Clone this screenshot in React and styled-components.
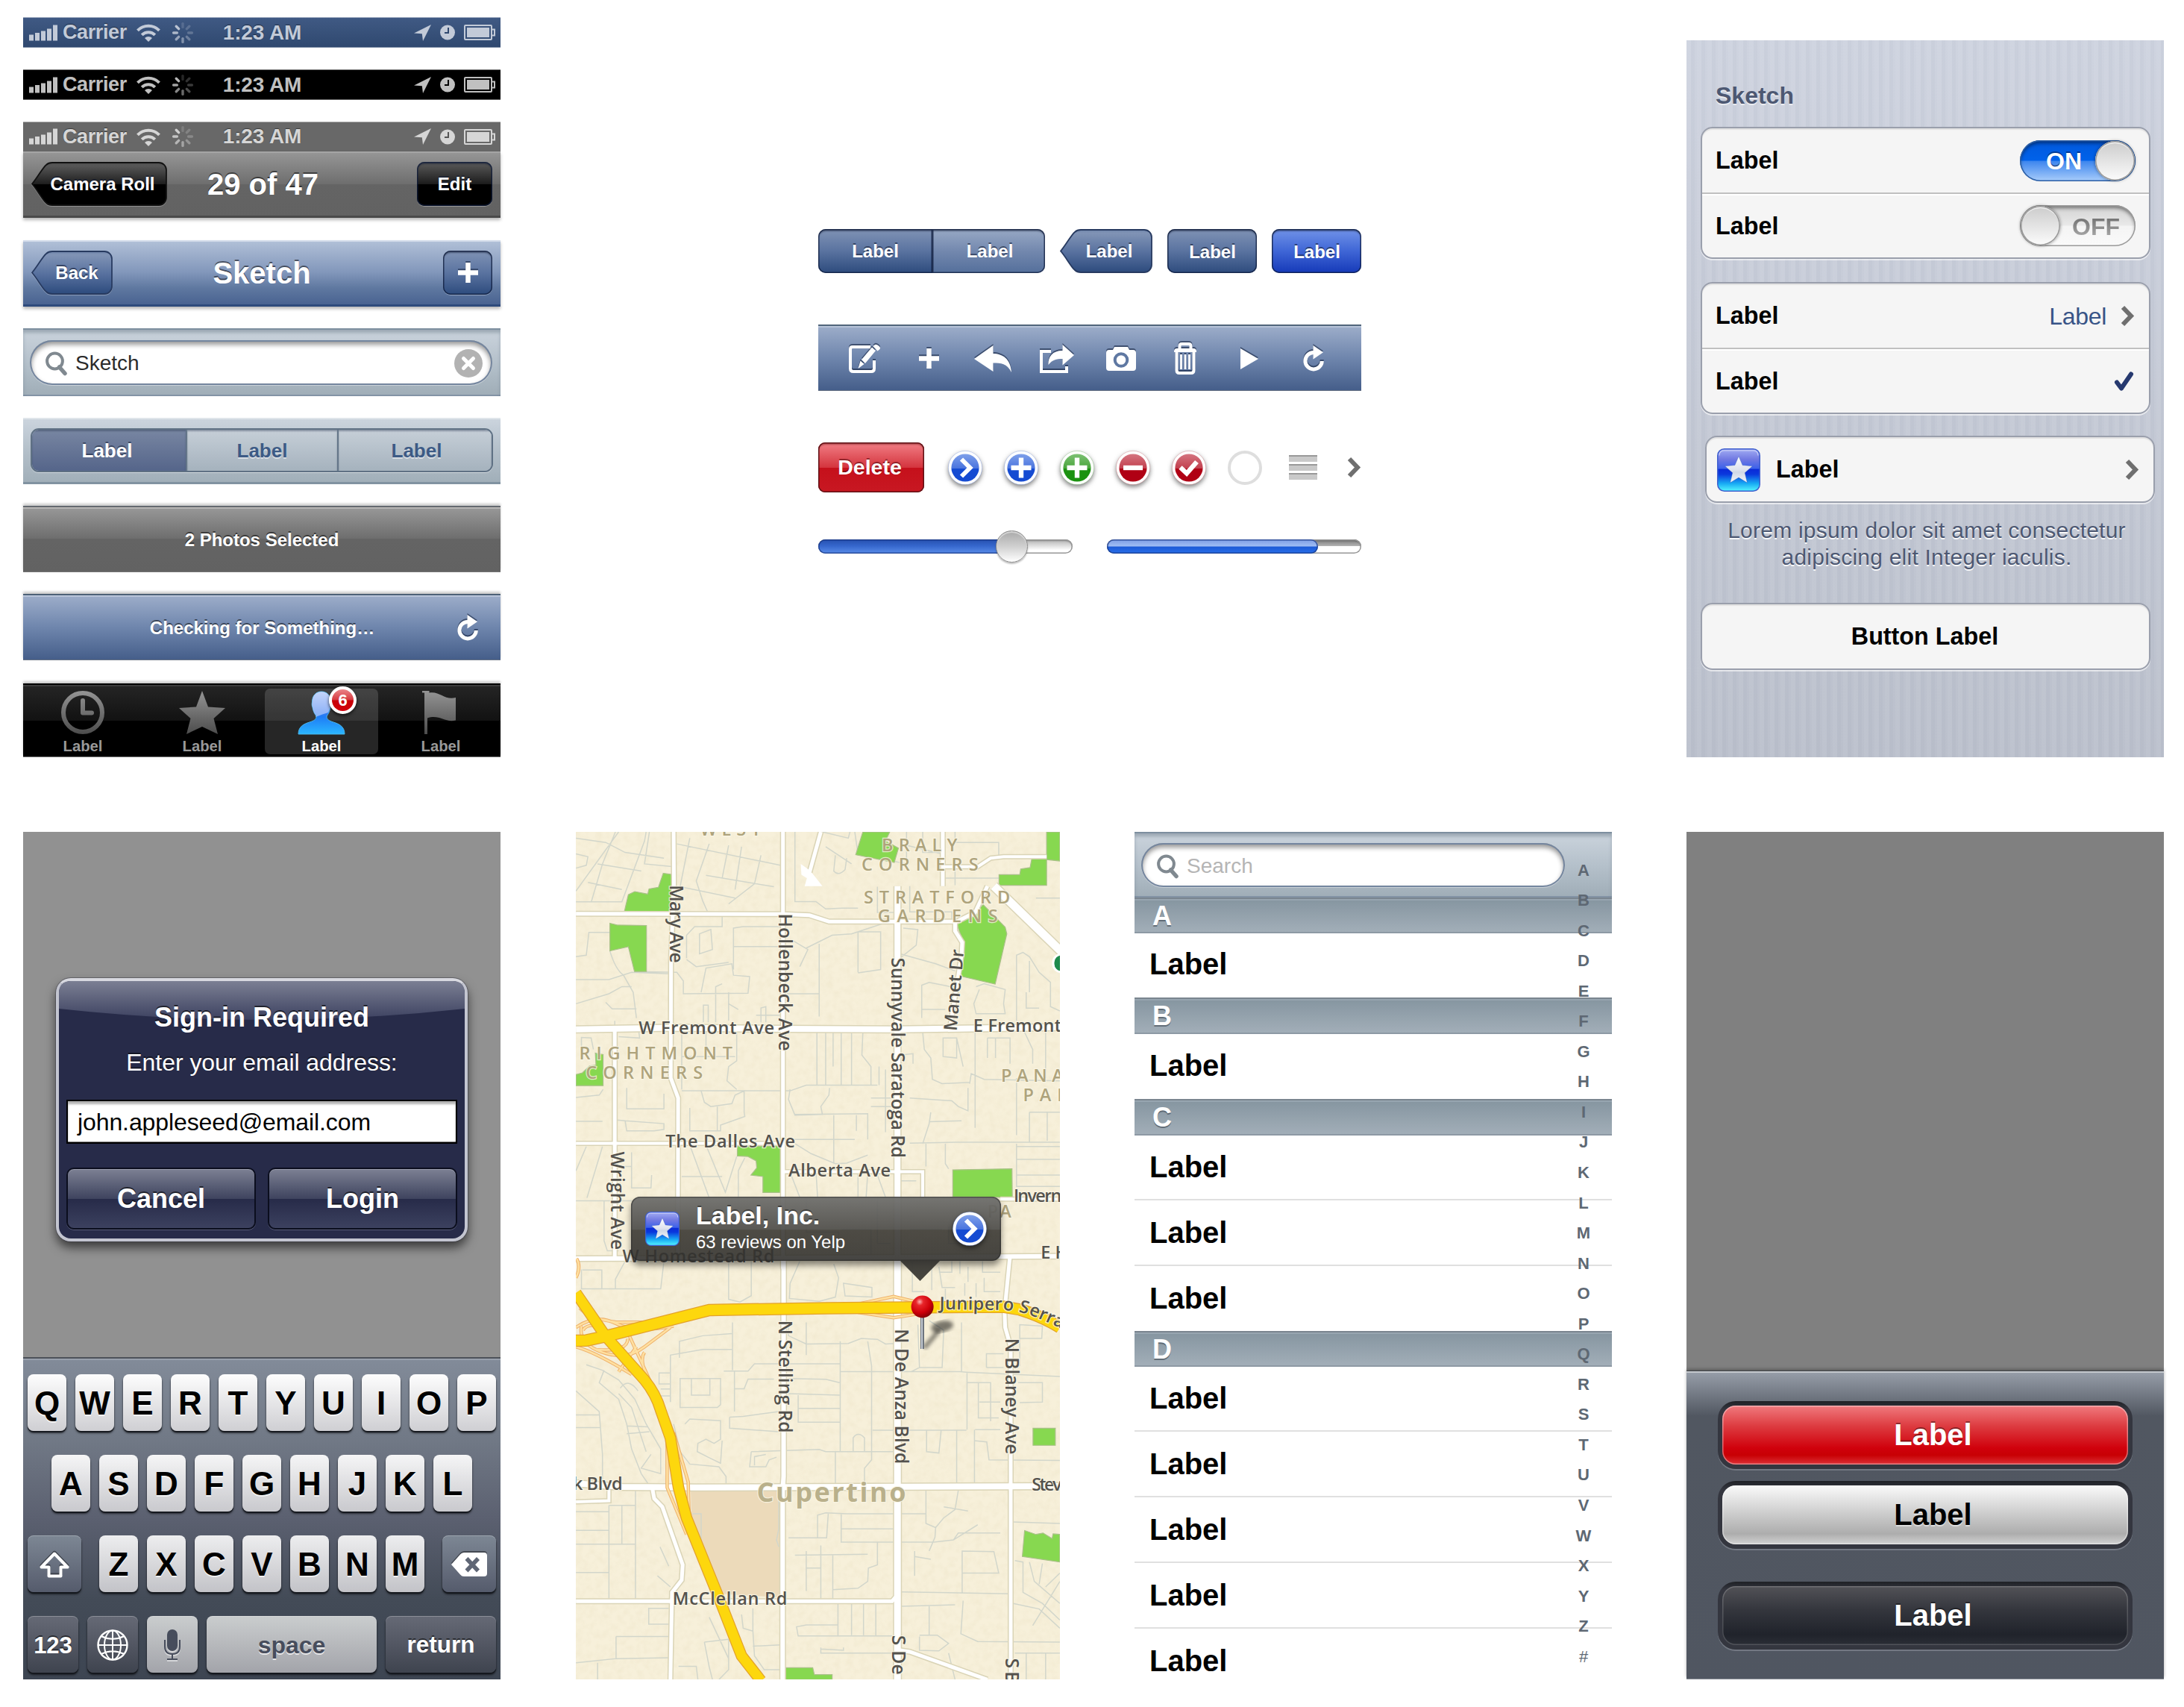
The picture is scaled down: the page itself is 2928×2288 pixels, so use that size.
import React from "react";
import styled, { createGlobalStyle, css } from "styled-components";

const Global = createGlobalStyle`
  * { box-sizing: border-box; }
  body { margin: 0; background: #fff; }
`;

/* ---------- page ---------- */

const Page = styled.main`
  width: 2928px;
  height: 2288px;
  overflow: hidden;
  background: #fff;
  font-family: "Liberation Sans", Arial, sans-serif;
  font-weight: 700;
  line-height: 1;
  white-space: nowrap;
`;
const Band = styled.section`
  display: flex;
  align-items: flex-start;
  height: ${(p) => p.$h}px;
  padding-left: 31px;
`;
const Column = styled.div`
  flex: none;
  display: flex;
  flex-direction: column;
  width: ${(p) => p.$w}px;
  margin-left: ${(p) => p.$ml || 0}px;
  padding-top: ${(p) => p.$pt || 0}px;
`;

/* ---------- shared drawings ---------- */

const Svg = styled.svg`
  display: block;
  flex: none;
  overflow: visible;
  filter: ${(p) => p.$filter || "none"};
`;
const raised = "drop-shadow(0 -2px 0 rgba(20,35,65,.6))";

const PlusIcon = ({ size = 27, bar = 6.5, filter = raised }) => (
  <Svg width={size} height={size} $filter={filter}>
    <path
      d={`M${size / 2} 0V${size}M0 ${size / 2}H${size}`}
      stroke="#fff"
      strokeWidth={bar}
    />
  </Svg>
);
const RefreshIcon = () => (
  <Svg width="28" height="35" viewBox="0 0 28 35" $filter={raised}>
    <path d="M14 9.5a11.2 11.2 0 1 0 11.3 11.5" fill="none" stroke="#fff" strokeWidth="5" />
    <path d="M13.5 0L27 9.2 13.5 18.5Z" fill="#fff" />
  </Svg>
);
const Chevron = ({ color = "#6f6f6f" }) => (
  <Svg width="17" height="27" viewBox="0 0 17 27">
    <path d="M2 2L13 13.5 2 25" fill="none" stroke={color} strokeWidth="6" />
  </Svg>
);
const STAR = "M0 -20L5.6 -7 20 -5.6 9 4 12.4 18.6 0 11 -12.4 18.6 -9 4 -20 -5.6 -5.6 -7Z";
const AppIcon = ({ id, size }) => (
  <Svg width={size} height={size} viewBox="0 0 58 58">
    <defs>
      <linearGradient id={id} x1="0" y1="0" x2="0" y2="1">
        <stop offset="0" stopColor="#a3adf3" />
        <stop offset=".25" stopColor="#7078e2" />
        <stop offset=".46" stopColor="#3c62ea" />
        <stop offset=".49" stopColor="#0a2bd8" />
        <stop offset=".6" stopColor="#0a38dd" />
        <stop offset=".82" stopColor="#18aaf4" />
        <stop offset="1" stopColor="#55f6ff" />
      </linearGradient>
      <linearGradient id={id + "s"} x1="0" y1="0" x2="0" y2="1">
        <stop offset="0" stopColor="#fff" />
        <stop offset=".5" stopColor="#dfe3ee" />
        <stop offset=".6" stopColor="#cfd8e6" />
        <stop offset="1" stopColor="#f4f6fa" />
      </linearGradient>
    </defs>
    <rect x=".75" y=".75" width="56.5" height="56.5" rx="9" fill={`url(#${id})`} stroke="#3f5fce" strokeWidth="1.5" />
    <path d="M3 9.5Q3 2.8 9.5 2.8H48.5Q55 2.8 55 9.5" fill="none" stroke="#c6cdf8" strokeWidth="1.2" />
    <g transform="translate(29 30)">
      <path d={STAR} transform="translate(0 -1) scale(.92)" fill={`url(#${id}s)`} stroke="#1c48b4" strokeOpacity=".35" strokeWidth="1" strokeLinejoin="round" />
    </g>
  </Svg>
);

const discs = {
  blue: ["#7fa0ea", "#4a74de", "#154bd2"],
  green: ["#7cc173", "#4aa53c", "#1b9210"],
  red: ["#d57580", "#c2404e", "#b00014"],
};
const Disc = ({ id, tone, children }) => {
  const c = discs[tone];
  return (
    <Svg width="46" height="46" viewBox="0 0 46 46" $filter="drop-shadow(0 3px 3px rgba(0,0,0,.5))">
      <defs>
        <linearGradient id={id} x1="0" y1="0" x2="0" y2="1">
          <stop offset="0" stopColor={c[0]} />
          <stop offset=".52" stopColor={c[1]} />
          <stop offset=".52" stopColor={c[2]} />
          <stop offset="1" stopColor={c[2]} />
        </linearGradient>
      </defs>
      <circle cx="23" cy="23" r="22.6" fill="#fff" stroke={c[1]} strokeOpacity=".35" strokeWidth=".8" />
      <circle cx="23" cy="23" r="18.6" fill={`url(#${id})`} />
      {children}
    </Svg>
  );
};
const DiscPlus = <path d="M23 9.5V36.5M9.5 23H36.5" stroke="#fff" strokeWidth="6.4" />;
const DiscArrow = <path d="M18 11.5L29.5 23 18 34.5" fill="none" stroke="#fff" strokeWidth="6" />;

/* ---------- status bars ---------- */

const statusFill = {
  blue: "linear-gradient(#405a84, #2f486f)",
  black: "#000",
  grey: "#686868",
};
const StatusBar = styled.div`
  display: grid;
  grid-template-columns: 1fr auto 1fr;
  align-items: center;
  height: ${(p) => (p.$joined ? 40 : 41)}px;
  margin-bottom: ${(p) => (p.$joined ? 0 : 29)}px;
  padding: 0 7px 0 8px;
  background: ${(p) => statusFill[p.$tone]};
  color: ${(p) => (p.$tone === "grey" ? "#d6d6d6" : p.$tone === "blue" ? "#c2cad8" : "#c0c0c0")};
  box-shadow: inset 0 1px 0 rgba(255, 255, 255, 0.45),
    inset 0 ${(p) => (p.$joined ? 0 : -1)}px 0 rgba(255, 255, 255, 0.4);
  text-shadow: 0 -1px 1px rgba(0, 0, 0, 0.45);
`;
const Carrier = styled.div`
  display: flex;
  align-items: center;
  font-size: 27px;
  letter-spacing: -0.4px;
`;
const Clock = styled.time`
  font-size: 28px;
  letter-spacing: -0.1px;
`;
const StatusIcons = styled.div`
  display: flex;
  justify-content: flex-end;
  align-items: center;
  gap: 12px;
`;
const Gap = styled.span`
  width: ${(p) => p.$w}px;
`;
const spokes = [0.2, 0.25, 0.3, 0.4, 0.55, 0.7, 0.85, 0.95];

const Status = ({ tone, joined }) => (
  <StatusBar $tone={tone} $joined={joined}>
    <Carrier>
      <Svg width="38" height="22" fill="currentColor">
        {[8, 10.5, 13, 16, 21].map((h, i) => (
          <rect key={i} x={i * 8} y={21.5 - h} width="6" height={h} />
        ))}
      </Svg>
      <Gap $w={7} />
      Carrier
      <Gap $w={13} />
      <Svg width="32" height="25" viewBox="0 0 32 25" fill="none" stroke="currentColor" strokeWidth="4">
        <path d="M1.5 9.8A20.5 20.5 0 0 1 30.5 9.8M7.2 15.8A12.4 12.4 0 0 1 24.8 15.8" />
        <path d="M16 25L11 20a7 7 0 0 1 10 0Z" fill="currentColor" stroke="none" />
      </Svg>
      <Gap $w={16} />
      <Svg width="28" height="28" viewBox="-14 -14 28 28" stroke="currentColor" strokeWidth="3.4" strokeLinecap="round">
        {spokes.map((o, i) => (
          <path key={i} d="M0 -7.6V-12.4" opacity={o} transform={`rotate(${i * 45})`} />
        ))}
      </Svg>
    </Carrier>
    <Clock>1:23 AM</Clock>
    <StatusIcons>
      <Svg width="23" height="22" viewBox="0 0 23 22" fill="currentColor">
        <path d="M23 0L12 22 10.8 12.2 0 11.4Z" />
      </Svg>
      <Svg width="20" height="21" viewBox="0 0 20 21">
        <circle cx="10" cy="10.5" r="10" fill="currentColor" />
        <path d="M11 4V11H6" fill="none" stroke={tone === "black" ? "#000" : tone === "blue" ? "#2f486f" : "#555"} strokeWidth="2" />
      </Svg>
      <Svg width="42" height="21" viewBox="0 0 42 21">
        <rect x="1" y="1" width="36" height="19" rx="1" fill="none" stroke="currentColor" strokeWidth="2" />
        <rect x="4" y="4" width="30" height="13" fill="currentColor" />
        <path d="M38 6.5h3v8h-3" fill="none" stroke="currentColor" strokeWidth="2" />
      </Svg>
    </StatusIcons>
  </StatusBar>
);

/* ---------- navigation bars ---------- */

const NavBar = styled.header`
  display: grid;
  grid-template-columns: 1fr auto 1fr;
  align-items: center;
  height: 89px;
  padding: 0 11px 2px;
  margin-bottom: ${(p) => (p.$tone === "grey" ? 30 : 29)}px;
  background: ${(p) =>
    p.$tone === "grey"
      ? "linear-gradient(#979797, #6e6e6e 49%, #646464 50%, #626262)"
      : "linear-gradient(#b2c1d8, #8297bb 48%, #5f78a0 72%, #46608f)"};
  box-shadow: inset 0 2px 0 ${(p) => (p.$tone === "grey" ? "#a5a5a5" : "#d3dcea")},
    inset 0 -3px 0 ${(p) => (p.$tone === "grey" ? "#4a4a4a" : "#2e4b7c")},
    0 3px 4px rgba(0, 0, 0, 0.28);
`;
const NavTitle = styled.h1`
  margin: 0;
  padding-left: ${(p) => p.$pl || 0}px;
  font-size: 40px;
  line-height: 44px;
  color: #fff;
  text-shadow: 0 -2px 0 rgba(0, 0, 0, 0.5);
`;

const buttonFill = {
  black: "linear-gradient(#5c5c5c, #1c1c1c 50%, #000 51%, #000)",
  blue: "linear-gradient(#8093b5, #5a73a0 50%, #2d4b7d)",
  bright: "linear-gradient(#7193e8, #3f66d6 50%, #1539b8)",
  light: "linear-gradient(#98a9c5, #7388ae 50%, #546f9b)",
};
const BarButton = styled.button`
  display: flex;
  align-items: center;
  justify-content: center;
  width: ${(p) => p.$w}px;
  height: 59px;
  padding: ${(p) => p.$pt || 0}px 0 0 ${(p) => p.$pl || 0}px;
  justify-self: end;
  border: 0;
  border-radius: 10px;
  font: 700 24px "Liberation Sans", Arial, sans-serif;
  line-height: 1;
  color: #fff;
  background: ${(p) => buttonFill[p.$tone]};
  text-shadow: 0 -2px 0 rgba(20, 30, 55, 0.6);
  box-shadow: inset 0 0 0 1.5px rgba(15, 28, 60, 0.75), inset 0 3px 2px rgba(10, 20, 45, 0.45),
    0 1px 0 rgba(255, 255, 255, 0.35);
`;
const BackShape = styled.button`
  position: relative;
  display: flex;
  align-items: center;
  justify-content: center;
  width: ${(p) => p.$w}px;
  height: 59px;
  padding: 0 0 0 ${(p) => p.$pl}px;
  border: 0;
  background: none;
  font: 700 24px "Liberation Sans", Arial, sans-serif;
  line-height: 1;
  color: #fff;
  text-shadow: 0 -2px 0 rgba(20, 30, 55, 0.6);
  svg { position: absolute; inset: 0; }
  span { position: relative; }
`;
const BackButton = ({ id, w, pl, black, children }) => (
  <BackShape $w={w} $pl={pl}>
    <Svg width={w} height="59" $filter="drop-shadow(0 1px 0 rgba(255,255,255,.3))">
      <defs>
        <linearGradient id={id} x1="0" y1="0" x2="0" y2="1">
          <stop offset="0" stopColor={black ? "#505050" : "#6f84aa"} />
          <stop offset=".08" stopColor={black ? "#565656" : "#8093b5"} />
          <stop offset=".5" stopColor={black ? "#1e1e1e" : "#5a73a0"} />
          <stop offset=".51" stopColor={black ? "#000" : "#5972a0"} />
          <stop offset="1" stopColor={black ? "#000" : "#2d4b7d"} />
        </linearGradient>
      </defs>
      <path
        d={`M1 29.5C9 20 15 8 20 4Q23 1 28 1H${w - 11}a10 10 0 0 1 10 10V48a10 10 0 0 1 -10 10H28Q23 58 20 55C15 51 9 39 1 29.5Z`}
        fill={`url(#${id})`}
        stroke={black ? "#111" : "#273a60"}
        strokeWidth="1.8"
      />
    </Svg>
    <span>{children}</span>
  </BackShape>
);

/* ---------- search, segments, toolbars, tabs ---------- */

const SearchBar = styled.div`
  display: flex;
  align-items: center;
  height: ${(p) => p.$h}px;
  margin-bottom: ${(p) => p.$mb || 0}px;
  padding: 0 ${(p) => p.$pr}px 0 9px;
  padding-top: ${(p) => p.$pt || 0}px;
  background: linear-gradient(#cbd4dd, #b5c1cb 50%, #9fadb7);
  box-shadow: inset 0 2px 0 #7d8f9f, inset 0 6px 4px rgba(110, 125, 140, 0.5), inset 0 -2px 0 #8393a5;
`;
const SearchField = styled.div`
  flex: 1;
  display: flex;
  align-items: center;
  height: ${(p) => p.$h}px;
  padding: 2px 13px 0 21px;
  border-radius: 30px;
  background: #fff;
  color: ${(p) => (p.$empty ? "#b5b5b5" : "#2b2b2b")};
  font-size: 28px;
  font-weight: 400;
  box-shadow: inset 0 0 0 2px #74869f, inset 0 4px 6px 2px rgba(0, 0, 0, 0.4), 0 1px 0 rgba(255, 255, 255, 0.4);
`;
const Query = styled.span`
  flex: 1;
  padding: 1px 0 0 11px;
`;
const Lens = () => (
  <Svg width="29" height="35" viewBox="0 0 29 35" fill="none" stroke="#808990">
    <circle cx="12.5" cy="15" r="10.4" strokeWidth="4" />
    <path d="M18.5 23L26 31.5" strokeWidth="5.5" strokeLinecap="round" />
  </Svg>
);
const SegmentBar = styled.div`
  display: flex;
  align-items: center;
  height: 89px;
  margin-bottom: 29px;
  padding: 0 10px 2px;
  background: linear-gradient(#ccd5de, #b3bfc9 50%, #a0aeb8);
  box-shadow: inset 0 2px 0 #dfe5ea, inset 0 -3px 0 #8193a1;
`;
const Segments = styled.div`
  flex: 1;
  display: flex;
  height: 59px;
  border-radius: 11px;
  overflow: hidden;
  border: 2px solid #5f7184;
  box-shadow: 0 1px 0 rgba(255, 255, 255, 0.5);
`;
const Segment = styled.button`
  flex: 1;
  padding: 0 ${(p) => p.$pr || 0}px 0 ${(p) => p.$pl || 0}px;
  border: 0;
  border-left: ${(p) => (p.$first ? 0 : "2px solid #647689")};
  font: 700 26px "Liberation Sans", Arial, sans-serif;
  line-height: 1;
  color: ${(p) => (p.$on ? "#fff" : "#3c5a85")};
  background: ${(p) => (p.$on ? "linear-gradient(#7886a2, #55658a)" : "linear-gradient(#c6cfd8, #a5b2bd)")};
  text-shadow: ${(p) => (p.$on ? "0 -2px 0 rgba(20,30,55,.55)" : "0 2px 0 rgba(255,255,255,.5)")};
  box-shadow: inset 0 2px 2px rgba(40, 55, 80, 0.4);
`;
const ToolBar = styled.footer`
  display: flex;
  align-items: center;
  height: 89px;
  margin-bottom: ${(p) => p.$mb || 0}px;
  padding: 2px ${(p) => p.$px || 0}px 0;
  font-size: 24px;
  color: #fff;
  text-shadow: 0 -2px 0 rgba(0, 0, 0, 0.5);
  background: ${(p) =>
    p.$tone === "grey"
      ? "linear-gradient(#9a9a9a, #6e6e6e 49%, #646464 50%, #626262)"
      : "linear-gradient(#9fafcb, #6f86ad 50%, #445d89)"};
  box-shadow: inset 0 1px 0 rgba(50, 65, 85, 0.55), inset 0 2px 0 ${(p) => (p.$tone === "grey" ? "#7a7a7a" : "#5a7086")},
    inset 0 4px 0 rgba(255, 255, 255, 0.28), inset 0 -1px 0 rgba(130, 130, 130, 0.6)
    ${(p) => (p.$plain ? "" : ", 0 -3px 3px rgba(0, 0, 0, 0.2)")};
`;
const ToolText = styled.span`
  flex: 1;
  text-align: center;
`;
const ToolSlot = styled.div`
  display: flex;
  align-items: center;
  justify-content: center;
  width: 86px;
`;
const CheckingBar = styled(ToolBar)`
  display: grid;
  grid-template-columns: 1fr auto 1fr;
  padding-right: 30px;
  padding-left: 31px;
  svg { justify-self: end; }
`;

const TabBar = styled.nav`
  display: flex;
  height: 99px;
  margin-top: 2px;
  background: linear-gradient(#262626, #121212 50%, #000 50.5%);
  box-shadow: inset 0 2px 0 #000, inset 0 4px 0 #3c3c3c, inset 0 -1px 0 #777, 0 -3px 3px rgba(0, 0, 0, 0.2);
`;
const Tab = styled.div`
  position: relative;
  display: flex;
  flex-direction: column;
  align-items: center;
  width: 152px;
  height: 88px;
  margin: 7px 4px 0;
  padding-top: 3px;
  border-radius: 7px;
  background: ${(p) => (p.$on ? "rgba(255,255,255,.15)" : "transparent")};
  color: ${(p) => (p.$on ? "#fff" : "#999")};
  font-size: 20.3px;
  span { margin-top: 6px; }
`;
const Badge = styled.b`
  position: absolute;
  left: 86px;
  top: -3px;
  display: flex;
  align-items: center;
  justify-content: center;
  width: 37px;
  height: 37px;
  border: 4px solid #fff;
  border-radius: 50%;
  font-size: 22px;
  color: #fff;
  background: linear-gradient(#ea8589, #d73a40 48%, #c80008 52%, #d1000a);
  box-shadow: 0 2px 4px rgba(0, 0, 0, 0.7);
`;

const TabIcons = {
  clock: (
    <>
      <circle cx="29" cy="29" r="26" fill="none" stroke="url(#tabGrey)" strokeWidth="6" />
      <path d="M29 13V29.5H41" fill="none" stroke="url(#tabGrey)" strokeWidth="6" strokeLinecap="round" strokeLinejoin="round" />
    </>
  ),
  star: <path d="M29 0L37 21.5 60 23 44.5 37 50 58 29 48 8 58 13.5 37 -2 23 21 21.5Z" fill="url(#tabGrey)" />,
  person: (
    <>
      <path
        d="M29 1C36 1 41.5 6 41.5 15C42 17 42 20 41 22C40 28 38 31 36 34C36 38 38 39 42 41C52 44 60 47 60 58H-2C-2 47 6 44 16 41C20 39 22 38 22 34C20 31 18 28 17 22C16 20 16 17 16.5 15C16.5 6 22 1 29 1Z"
        fill="url(#tabBlue)"
        stroke="#48b9f0"
        strokeWidth="1"
      />
      <path d="M29 1C36 1 41.5 6 41.5 15C42 17 42 20 41 22L38 29Q31 31 21 35L22 33C20 31 18 28 17 22C16 20 16 17 16.5 15C16.5 6 22 1 29 1Z" fill="#cfdcfb" opacity=".6" />
    </>
  ),
  flag: (
    <path
      d="M4 0H13.5V2.5C28 0 34 13 49 9V39.5C34 43 27 31 11 36.5V58H7V2.5H4Z"
      fill="url(#tabGrey)"
    />
  ),
};
const TabIcon = ({ name }) => (
  <Svg width="58" height="58" viewBox="0 0 58 58">
    <defs>
      <linearGradient id="tabGrey" gradientUnits="userSpaceOnUse" x1="0" y1="0" x2="0" y2="58">
        <stop offset="0" stopColor="#949494" />
        <stop offset="1" stopColor="#4c4c4c" />
      </linearGradient>
      <linearGradient id="tabBlue" gradientUnits="userSpaceOnUse" x1="0" y1="0" x2="0" y2="58">
        <stop offset="0" stopColor="#b9cdf8" />
        <stop offset=".48" stopColor="#3c7cf0" />
        <stop offset=".6" stopColor="#1f7cf6" />
        <stop offset="1" stopColor="#2ab6ff" />
      </linearGradient>
    </defs>
    {TabIcons[name]}
  </Svg>
);

const BarsColumn = () => (
  <Column $w={640} $pt={23}>
    <Status tone="blue" />
    <Status tone="black" />
    <Status tone="grey" joined />
    <NavBar $tone="grey">
      <BackButton id="backBlack" w={182} pl={9} black>Camera Roll</BackButton>
      <NavTitle $pl={3}>29 of 47</NavTitle>
      <BarButton $tone="black" $w={101}>Edit</BarButton>
    </NavBar>
    <NavBar $tone="blue">
      <BackButton id="backNav" w={109} pl={13}>Back</BackButton>
      <NavTitle>Sketch</NavTitle>
      <BarButton $tone="blue" $w={66}><PlusIcon /></BarButton>
    </NavBar>
    <SearchBar $h={91} $mb={29} $pr={11}>
      <SearchField $h={60}>
        <Lens />
        <Query>Sketch</Query>
        <Svg width="38" height="38" viewBox="0 0 38 38">
          <circle cx="19" cy="19" r="19" fill="#b2b2b2" />
          <path d="M12.5 12.5L25.5 25.5M25.5 12.5L12.5 25.5" stroke="#fff" strokeWidth="5" strokeLinecap="round" />
        </Svg>
      </SearchField>
    </SearchBar>
    <SegmentBar>
      <Segments>
        <Segment $first $on $pr={5}>Label</Segment>
        <Segment>Label</Segment>
        <Segment $pl={4}>Label</Segment>
      </Segments>
    </SegmentBar>
    <ToolBar $tone="grey" $mb={29}><ToolText>2 Photos Selected</ToolText></ToolBar>
    <CheckingBar $mb={29}>
      <i />
      <ToolText>Checking for Something…</ToolText>
      <RefreshIcon />
    </CheckingBar>
    <TabBar>
      <Tab><TabIcon name="clock" /><span>Label</span></Tab>
      <Tab><TabIcon name="star" /><span>Label</span></Tab>
      <Tab $on><TabIcon name="person" /><span>Label</span><Badge>6</Badge></Tab>
      <Tab><TabIcon name="flag" /><span>Label</span></Tab>
    </TabBar>
  </Column>
);

/* ---------- controls ---------- */

const ControlRow = styled.div`
  display: flex;
  align-items: center;
  height: ${(p) => p.$h}px;
  margin-bottom: ${(p) => p.$mb || 0}px;
  gap: ${(p) => p.$gap || 0}px;
`;
const ButtonPair = styled.div`
  display: flex;
  ${BarButton}:first-child { border-radius: 10px 0 0 10px; }
  ${BarButton}:last-child { border-radius: 0 10px 10px 0; }
`;
const DeleteButton = styled.button`
  flex: none;
  width: 142px;
  height: 67px;
  margin-right: 3px;
  border: 0;
  padding: 0 4px 0 0;
  border-radius: 9px;
  font: 700 28.5px "Liberation Sans", Arial, sans-serif;
  line-height: 1;
  color: #fff;
  text-shadow: 0 -2px 0 rgba(70, 0, 5, 0.5);
  background: linear-gradient(#f27f86, #d4353e 50%, #c5101b 51%, #c81822);
  box-shadow: inset 0 0 0 1.5px #5f1115, inset 0 3px 2px rgba(80, 0, 0, 0.4);
`;
const EmptyDisc = styled.span`
  flex: none;
  width: 46px;
  height: 46px;
  border: 4px solid #dedede;
  border-radius: 50%;
`;
const Grip = styled.span`
  flex: none;
  display: flex;
  flex-direction: column;
  gap: 3px;
  width: 38px;
  margin: 0 12px 0 7px;
  i {
    height: 9px;
    background: #c9c9c9;
    border-top: 2px solid #999;
  }
`;
const Track = styled.div`
  position: relative;
  display: flex;
  align-items: center;
  width: 341px;
  height: 19px;
  border-radius: 10px;
  background: ${(p) => (p.$progress ? "linear-gradient(#777, #b5b5b5 48%, #fff 50%)" : "linear-gradient(#b0b0b0, #fff 75%)")};
  box-shadow: inset 0 0 0 1.5px #979797, inset 0 2px 2px rgba(0, 0, 0, 0.3);
`;
const Fill = styled.div`
  width: ${(p) => p.$w}px;
  height: 19px;
  border-radius: 10px;
  background: ${(p) =>
    p.$progress ? "linear-gradient(#7c9ce4, #9fbdf4 48%, #1c5ad6 52%, #2a70ea)" : "linear-gradient(#2650ae, #3566cc 45%, #5b8eea)"};
  box-shadow: inset 0 0 0 1.5px rgba(25, 55, 130, 0.75);
`;
const Knob = styled.div`
  position: absolute;
  left: 238px;
  top: -12px;
  width: 43px;
  height: 43px;
  border: 1.5px solid #8c8c8c;
  border-radius: 50%;
  background: linear-gradient(#a9a9a9, #d0d0d0 50%, #fff);
  box-shadow: inset 0 2px 1px rgba(255, 255, 255, 0.5), 0 2px 2px rgba(0, 0, 0, 0.25);
`;

const toolIcons = [
  <Svg key="compose" width="42" height="38" viewBox="0 0 42 38" $filter={raised}>
    <path d="M29 3H5Q2 3 2 6V32Q2 36 6 36H30Q34 36 34 32V21" fill="none" stroke="#fff" strokeWidth="4" />
    <path d="M12.5 32L15.5 21.5 20.5 26ZM17 20L31 3.5 36 8 22 25ZM32.5 2L35 0Q37-1 40 1.5T41.5 6L38.5 8.5Z" fill="#fff" />
  </Svg>,
  <PlusIcon key="plus" />,
  <Svg key="reply" width="50" height="36" viewBox="0 0 50 36" $filter={raised}>
    <path d="M0 18L25.5 0V11C38 11 49 18 50 36C44 24 36 23.5 25.5 23.5V35Z" fill="#fff" />
  </Svg>,
  <Svg key="share" width="46" height="38" viewBox="0 0 46 38" $filter={raised}>
    <path d="M15 9H2V36H36V29" fill="none" stroke="#fff" strokeWidth="4" />
    <path d="M46 14L30.5 0V8C17 8 11 16 11.5 27C17 20 22 19 30.5 19V27.5Z" fill="#fff" />
  </Svg>,
  <Svg key="camera" width="40" height="32" viewBox="0 0 40 32" $filter={raised}>
    <path d="M4 4H9L11 0H29L31 4H36Q40 4 40 8V28Q40 32 36 32H4Q0 32 0 28V8Q0 4 4 4Z" fill="#fff" />
    <circle cx="20" cy="17.5" r="8.3" fill="#fff" stroke="#5f78a2" strokeWidth="4" />
  </Svg>,
  <Svg key="trash" width="32" height="43" viewBox="0 0 32 43" fill="none" stroke="#fff" $filter={raised}>
    <path d="M8.500 8V5Q8.500 2 11.500 2H20.500Q23.500 2 23.500 5V8" strokeWidth="4" />
    <path d="M1 13V12Q1 8 5 8H27Q31 8 31 12V13Z" fill="#fff" stroke="none" />
    <path d="M4.500 12V37Q4.500 41 8 41H24Q27.500 41 27.500 37V12" strokeWidth="4" />
    <path d="M10.500 16V36M16 16V36M21.500 16V36" strokeWidth="2.800" />
  </Svg>,
  <Svg key="play" width="24" height="28" viewBox="0 0 24 28" $filter={raised}>
    <path d="M0 0L24 14 0 28Z" fill="#fff" />
  </Svg>,
  <RefreshIcon key="refresh" />,
];

const ControlsColumn = () => (
  <Column $w={728} $ml={426} $pt={307}>
    <ControlRow $h={59} $mb={69} $gap={20}>
      <ButtonPair>
        <BarButton $tone="blue" $w={153}>Label</BarButton>
        <BarButton $tone="light" $w={151} $pl={3}>Label</BarButton>
      </ButtonPair>
      <BackButton id="backLabel" w={124} pl={8}>Label</BackButton>
      <BarButton $tone="blue" $w={120} $pt={2} $pl={1}>Label</BarButton>
      <BarButton $tone="bright" $w={120} $pt={2} $pl={1}>Label</BarButton>
    </ControlRow>
    <ToolBar $px={19} $plain $mb={69}>
      {toolIcons.map((icon, i) => <ToolSlot key={i}>{icon}</ToolSlot>)}
    </ToolBar>
    <ControlRow $h={67} $mb={63} $gap={29}>
      <DeleteButton>Delete</DeleteButton>
      <Disc id="d1" tone="blue">{DiscArrow}</Disc>
      <Disc id="d2" tone="blue">{DiscPlus}</Disc>
      <Disc id="d3" tone="green">{DiscPlus}</Disc>
      <Disc id="d4" tone="red"><path d="M10 23H36" stroke="#fff" strokeWidth="6.400" /></Disc>
      <Disc id="d5" tone="red"><path d="M11.500 22.500L20 30.500 33.500 15" fill="none" stroke="#fff" strokeWidth="6.400" /></Disc>
      <EmptyDisc />
      <Grip><i /><i /><i /></Grip>
      <Chevron />
    </ControlRow>
    <ControlRow $h={19} $gap={46}>
      <Track><Fill $w={258} /><Knob /></Track>
      <Track $progress><Fill $w={283} $progress /></Track>
    </ControlRow>
  </Column>
);

/* ---------- grouped settings ---------- */

const Settings = styled.div`
  height: 961px;
  margin-top: 54px;
  padding: 58px 18px 0 19px;
  background: repeating-linear-gradient(90deg, rgba(255, 255, 255, 0.05) 0 6px, rgba(80, 95, 120, 0.03) 6px 11px, transparent 11px 14px),
    linear-gradient(#ced3df, #bbc0cc);
`;
const GroupTitle = styled.h2`
  margin: 0 0 26px 20px;
  font-size: 32px;
  line-height: 32px;
  color: #4d5872;
  text-shadow: 0 2px 0 rgba(255, 255, 255, 0.6);
`;
const Group = styled.div`
  margin: 0 ${(p) => -(p.$dx || 0)}px ${(p) => p.$mb}px ${(p) => p.$dx || 0}px;
  border: 2px solid #9a9fac;
  border-radius: 16px;
  background: #f5f5f5;
  box-shadow: 0 2px 0 rgba(255, 255, 255, 0.6), inset 0 2px 1px rgba(0, 0, 0, 0.08);
`;
const Cell = styled.div`
  display: flex;
  align-items: center;
  justify-content: ${(p) => (p.$center ? "center" : "flex-start")};
  height: 86px;
  padding: 1px 20px 0 ${(p) => p.$pl || 18}px;
  font-size: 32.3px;
  color: #000;
  & + & {
    height: 87px;
    border-top: 2px solid #c0c0c0;
    box-shadow: inset 0 2px 0 #fff;
  }
`;
const Spring = styled.span`
  flex: 1;
`;
const CellValue = styled.span`
  margin-right: 20px;
  font-size: 32px;
  font-weight: 400;
  letter-spacing: -0.3px;
  color: #385487;
`;
const CellLabel = styled.span`
  padding-left: ${(p) => p.$pl || 0}px;
`;
const SwitchBody = styled.div`
  position: relative;
  display: flex;
  align-items: center;
  justify-content: ${(p) => (p.$on ? "flex-end" : "flex-start")};
  width: 155px;
  height: 55px;
  border-radius: 28px;
  background: ${(p) =>
    p.$on
      ? "linear-gradient(#0058dc, #0062ea 49%, #3d86ee 51%, #a9cdfb)"
      : "linear-gradient(#d2d2d2, #e9e9e9 49%, #f4f4f4 51%, #fafafa)"};
  box-shadow: inset 0 0 0 1.5px ${(p) => (p.$on ? "#2c5fa5" : "#9a9a9a")}, inset 0 4px 5px rgba(0, 0, 0, 0.45);
  margin: 0 -2px 1px 0;
`;
const SwitchWord = styled.span`
  font-size: 32px;
  padding-top: 2px;
  margin: ${(p) => (p.$on ? "0 17px 0 0" : "0 0 0 15px")};
  ${(p) =>
    p.$on
      ? css`color: #fff; text-shadow: 0 -2px 0 rgba(0, 20, 70, 0.5);`
      : css`color: transparent; background: linear-gradient(#666, #adadad); background-clip: text;`}
`;
const SwitchKnob = styled.span`
  width: 53px;
  height: 53px;
  margin: 0 1px;
  border-radius: 50%;
  background: linear-gradient(#cbcbcb, #fcfcfc);
  box-shadow: inset 0 0 0 1.5px #979797, inset 0 3px 1px rgba(255, 255, 255, 0.8), 0 0 4px rgba(0, 0, 0, 0.45);
`;
const Note = styled.p`
  margin: 0 0 43px 3px;
  text-align: center;
  font-size: 30px;
  line-height: 36px;
  font-weight: 400;
  letter-spacing: 0.22px;
  color: #4d5872;
  text-shadow: 0 2px 0 rgba(255, 255, 255, 0.9);
`;

const SettingsColumn = () => (
  <Column $w={640} $ml={436}>
    <Settings>
      <GroupTitle>Sketch</GroupTitle>
      <Group $mb={31}>
        <Cell>
          Label<Spring />
          <SwitchBody $on><SwitchWord $on>ON</SwitchWord><SwitchKnob /></SwitchBody>
        </Cell>
        <Cell>
          Label<Spring />
          <SwitchBody><SwitchKnob /><SwitchWord>OFF</SwitchWord></SwitchBody>
        </Cell>
      </Group>
      <Group $mb={29}>
        <Cell>Label<Spring /><CellValue>Label</CellValue><Chevron /></Cell>
        <Cell>
          Label<Spring />
          <Svg width="27" height="27" viewBox="0 0 27 27">
            <path d="M4 14.5L10 22.5 23 3.5" fill="none" stroke="#26396f" strokeWidth="6" strokeLinecap="round" strokeLinejoin="round" />
          </Svg>
        </Cell>
      </Group>
      <Group $mb={19} $dx={6}>
        <Cell $pl={14}>
          <AppIcon id="appCell" size={58} />
          <CellLabel $pl={21}>Label</CellLabel>
          <Spring />
          <Chevron />
        </Cell>
      </Group>
      <Note>
        Lorem ipsum dolor sit amet consectetur
        <br />
        adipiscing elit Integer iaculis.
      </Note>
      <Group $mb={0}><Cell $center>Button Label</Cell></Group>
    </Settings>
  </Column>
);

/* ---------- alert and keyboard ---------- */

const AlertScreen = styled.div`
  display: flex;
  flex-direction: column;
  height: 1136px;
  background: #919191;
`;
const Alert = styled.div`
  position: relative;
  width: 552px;
  height: 353px;
  margin: 196px 0 155px 44px;
  padding: 31px 10px 0;
  border: 4px solid #c3c5d0;
  border-top-color: #d8d9e0;
  border-radius: 20px;
  background: #272b49;
  box-shadow: 0 0 0 1px rgba(60, 60, 70, 0.5), 0 8px 14px rgba(0, 0, 0, 0.6);
  text-align: center;
  color: #fff;
`;
const Gloss = styled.svg`
  position: absolute;
  left: 0;
  top: 0;
`;
const AlertTitle = styled.h2`
  position: relative;
  margin: 0 0 26px;
  font-size: 36px;
  line-height: 36px;
  text-shadow: 0 -2px 0 rgba(0, 0, 0, 0.6);
`;
const AlertText = styled.p`
  margin: 0 0 34px;
  font-size: 32px;
  font-weight: 400;
  letter-spacing: -0.05px;
  line-height: 32px;
  text-shadow: 0 -2px 0 rgba(0, 0, 0, 0.5);
`;
const AlertField = styled.div`
  display: flex;
  align-items: center;
  height: 59px;
  margin-bottom: 32px;
  padding-left: 13px;
  border: 2px solid #000;
  background: #fff;
  color: #000;
  font-size: 32px;
  font-weight: 400;
  letter-spacing: -0.1px;
  box-shadow: inset 0 4px 3px rgba(0, 0, 0, 0.3), inset 0 -1px 0 #888;
`;
const AlertButtons = styled.div`
  display: grid;
  grid-template-columns: 1fr 1fr;
  gap: 16px;
`;
const AlertButton = styled.button`
  height: 83px;
  padding: 0;
  border: 2px solid #0b0e1e;
  border-radius: 10px;
  font: 700 36px "Liberation Sans", Arial, sans-serif;
  line-height: 1;
  color: #fff;
  text-shadow: 0 -2px 0 rgba(0, 0, 0, 0.6);
  background: linear-gradient(#7c8093, #3f445f 50%, #272b49 51%, #3c415f);
  box-shadow: inset 0 1px 0 #9c9fae, 0 1px 0 #5a5e78;
`;

const Keyboard = styled.div`
  flex: 1;
  display: flex;
  flex-direction: column;
  gap: 32px;
  padding: 21px 6px 0;
  border-top: 2px solid #4d525a;
  background: linear-gradient(#828b99, #717986 25%, #5b6070 50%, #434b57 75%, #3d4552);
  box-shadow: inset 0 2px 0 #98a0ac;
`;
const KeyRow = styled.div`
  display: flex;
  justify-content: ${(p) => (p.$spread ? "space-between" : "center")};
  gap: 12px;
`;
const keyFill = {
  light: "linear-gradient(#fdfdfd, #cfcfd3)",
  slate: "linear-gradient(#7d8794, #555b6c)",
  dark: "linear-gradient(#666a76, #3f444f)",
  soft: "linear-gradient(#cacdce, #a3a4aa)",
};
const Key = styled.button`
  display: flex;
  align-items: center;
  justify-content: center;
  width: ${(p) => p.$w || 52}px;
  height: 76px;
  padding: 2px 0 0;
  border: 0;
  border-radius: 8px;
  font: 700 ${(p) => p.$size || 44}px "Liberation Sans", Arial, sans-serif;
  line-height: 1;
  color: ${(p) => (p.$tone === "dark" ? "#fff" : p.$tone === "soft" ? "#474d5c" : "#000")};
  background: ${(p) => (p.$shade ? `linear-gradient(rgba(50,55,70,${p.$shade}), rgba(50,55,70,${p.$shade})),` : "")}
    ${(p) => keyFill[p.$tone || "light"]};
  text-shadow: ${(p) => (p.$tone === "dark" ? "0 -2px 0 rgba(0,0,0,.55)" : "0 2px 0 rgba(255,255,255,.7)")};
  box-shadow: inset 0 1px 0 rgba(255, 255, 255, 0.25), 0 2px 1px #15181e, 0 3px 3px rgba(0, 0, 0, 0.55);
`;
const KeyGroup = styled.div`
  display: flex;
  gap: 12px;
`;

const AlertColumn = () => (
  <Column $w={640}>
    <AlertScreen>
      <Alert>
        <Gloss width="544" height="60">
          <defs>
            <linearGradient id="gloss" x1="0" y1="0" x2="0" y2="1">
              <stop offset="0" stopColor="#7b7f93" />
              <stop offset="1" stopColor="#3c4160" />
            </linearGradient>
          </defs>
          <path d="M0 16Q0 0 16 0H528Q544 0 544 16V37Q272 67 0 37Z" fill="url(#gloss)" />
        </Gloss>
        <AlertTitle>Sign-in Required</AlertTitle>
        <AlertText>Enter your email address:</AlertText>
        <AlertField>john.appleseed@email.com</AlertField>
        <AlertButtons>
          <AlertButton>Cancel</AlertButton>
          <AlertButton>Login</AlertButton>
        </AlertButtons>
      </Alert>
      <Keyboard>
        <KeyRow>{[..."QWERTYUIOP"].map((k) => <Key key={k}>{k}</Key>)}</KeyRow>
        <KeyRow>{[..."ASDFGHJKL"].map((k) => <Key key={k} $shade={0.04}>{k}</Key>)}</KeyRow>
        <KeyRow $spread>
          <Key $tone="slate" $w={72}>
            <Svg width="40" height="35" viewBox="0 0 40 35" $filter="drop-shadow(0 -2px 0 rgba(0,0,0,.4))">
              <path d="M20 2.5L37.5 20.5H28.5V32.5H12.5V20.5H2.5Z" fill="none" stroke="#fff" strokeWidth="4" strokeLinejoin="round" />
            </Svg>
          </Key>
          <KeyGroup>{[..."ZXCVBNM"].map((k) => <Key key={k} $shade={0.08}>{k}</Key>)}</KeyGroup>
          <Key $tone="slate" $w={72}>
            <Svg width="48" height="32" viewBox="0 0 48 32" $filter="drop-shadow(0 -2px 0 rgba(0,0,0,.4))">
              <path d="M0 16L12 2.5Q14 0 17 0H44Q48 0 48 4V28Q48 32 44 32H17Q14 32 12 29.5Z" fill="#fff" />
              <path d="M20.500 8L36 24.500M36 8L20.500 24.500" stroke="#5f6675" strokeWidth="5.500" />
            </Svg>
          </Key>
        </KeyRow>
        <KeyRow $spread>
          <Key $tone="dark" $w={68} $size={31}>123</Key>
          <Key $tone="dark" $w={68}>
            <Svg width="42" height="42" viewBox="-21 -21 42 42" fill="none" stroke="#fff" strokeWidth="2">
              <circle r="19.500" strokeWidth="2.400" />
              <path d="M0-20V20M-20 0H20M-15.500-12Q0-4.500 15.500-12M-15.500 12Q0 4.500 15.500 12" />
              <ellipse rx="11" ry="19.500" />
            </Svg>
          </Key>
          <Key $tone="soft" $w={68}>
            <Svg width="22" height="42" viewBox="0 0 22 42" fill="none" stroke="#474d5c" $filter="drop-shadow(0 2px 0 rgba(255,255,255,.5))">
              <rect x="4" y="0" width="14" height="29" rx="7" fill="#474d5c" stroke="none" />
              <path d="M1 14V23Q1 33 11 33T21 23V14M11 33V39.500M4 40H18" strokeWidth="2" />
            </Svg>
          </Key>
          <Key $tone="soft" $w={228} $size={32}>space</Key>
          <Key $tone="dark" $w={148} $size={31.5}>return</Key>
        </KeyRow>
      </Keyboard>
    </AlertScreen>
  </Column>
);

/* ---------- map ---------- */

const MapFrame = styled.div`
  position: relative;
  width: 649px;
  height: 1136px;
  overflow: hidden;
  background: #f7f0da;
  > svg { display: block; }
`;
const MapText = styled.text`
  font-family: "Open Sans", "Noto Sans", sans-serif;
  font-weight: ${(p) => p.$weight || 600};
  font-size: ${(p) => p.$size || 23.5}px;
  fill: ${(p) => p.$fill || "#54524d"};
  paint-order: stroke;
  stroke: rgba(250, 246, 230, 0.75);
  stroke-width: 2.5px;
`;

const tiles = {
  north: { kx: 2.3059, ky: 2.6133, y0: -14.5 },
  south: { kx: 2.3059, ky: 2.7034, y0: 575.5 },
};
const toMap = (tile, x, y) => [x / tiles[tile].kx - 12, y / tiles[tile].ky + tiles[tile].y0];
const Tile = ({ name, children }) => {
  const t = tiles[name];
  return <g transform={`matrix(${1 / t.kx} 0 0 ${1 / t.ky} -12 ${t.y0})`}>{children}</g>;
};

const lanes = {
  north:
    "M28 245L160 38M28 60L120 75 180 110 300 130M28 115L65 125 60 155 28 165M75 285L110 150 150 38M28 283H170L240 70 245 38M65 215L170 240M95 150L230 175M255 38L240 150 330 160M340 80L660 155M380 60L350 230 520 270M440 80L400 210 420 280 435 318M540 90L520 240M600 120L580 220 500 290M500 85L480 200M430 190L640 230M705 38V282H770L800 308 850 305H900M790 38L870 60 875 38M800 90L880 150M830 120L825 175Q840 195 860 170L865 130M890 38L900 115 1050 150V38M1100 38V110H1160M1050 85L1160 115M1200 38V75H1335V128M1200 130V225M1160 200H1335M960 230V320H1020M1060 228V318H1190V355M28 475L60 470 68 390H133M133 455Q150 520 175 540L205 600 215 690M28 555H130L200 530 320 535M28 640L130 605 170 580H200M120 635L140 658H215M210 527L340 530 360 560V605L560 603 565 545 515 540 510 500 430 515 415 600M370 480V400L395 370H480V335M370 485L400 510 500 495M410 465V395L445 380 450 450ZM515 520V375L545 370H660M515 440H655M700 420L745 450 720 510M740 445L820 400 880 395 1015 345M780 430V685M680 605H780M900 530V388H970V520L900 532M1040 375L1085 380 1080 435 1030 480M1030 465L1140 500 1200 525M1097 690V575L1120 565 1185 580M1097 660H1170M1265 580L1290 570 1355 590 1350 640 1355 675H1265L1258 640 1275 590M1390 700V470L1410 460 1430 475 1460 530 1495 565V650L1524 665M1420 600V655H1460M1430 490V600M1450 270H1524M422 705V645H437V705M460 705V580L480 570M500 600V700M500 640L530 660M600 705V655L615 650V705M585 680H660M148 730V700M45 810V758L75 760 82 800M222 735L225 760 160 755M355 735V940M355 945H690L740 925H960M355 825H520M525 735V840L500 860 495 910 525 940M430 735V825M773 740V925M800 740V925M823 740V860M848 740V925M880 740V925M915 740L912 820 940 860V925M965 860V925M985 870V940M1030 820L1070 815V850M1100 740L1105 800 1125 830 1130 905 1160 920 1245 915M1163 760H1205V830L1163 825ZM1205 760L1225 860M1262 740V1075M1300 760H1370V850M1300 760V830M1325 760V830M1245 920L1250 885 1290 905 1524 910M1415 740L1440 800V850M1480 740V900M415 945L425 985 445 1000 510 990 520 960 548 945V1020L550 1035 475 1065V1085H380V1005M465 1000V1085M28 968L100 960 112 940M185 935V1008H300V955M155 1047L180 1050 185 1085H270L300 1080V1060L180 1050M28 1052H110M690 940L685 975 705 1030 790 1028 785 1000 810 960 812 935M705 1028L930 1025V1115M825 1030V1200M895 1030V1085M680 1115H890M705 1130L755 1165 830 1200 865 1198 930 1170M940 970H1020M940 1000H1020M985 940V1090M1060 970L1190 980 1210 1000 1240 1015V935M1125 1020L1120 1060 1100 1130M1120 1053L1220 1050M1060 1128L1200 1125H1524M1390 900V1100M1430 1020V1125M1430 1020H1524M1485 1020V1120M1170 1130V1200L1180 1218M1110 1130V1210M1390 1140H1524M1390 1185H1524M1390 1240H1524M1390 1130V1280H1524M28 1225L60 1140M62 1320L110 1140M200 1160V1285H260L262 1240M200 1210H165M380 1135L440 1320M430 1135L490 1300 525 1175M355 1245H480M28 1330H200M115 1330V1470L125 1505H160M690 1230L720 1318M715 1225H770L775 1318M900 1235V1318M930 1235L925 1318M960 1240L985 1318M1030 1260H1080M550 1180L530 1225V1318M740 1320V1440H840V1525M850 1430H940V1525M960 1330V1480H1000M1060 1430H1160M1180 1420V1480H1240M1240 1380V1430",
  south:
    "M45 30V100H290L300 0M48 32H108V100M150 100V65L180 0M500 0V138L535 148 570 125V0M720 0L690 80 688 135 780 145 830 130 840 60 825 10M855 80L943 95V130L860 126ZM1068 0V110H1105M1128 0V105M1150 20L1160 95H1200M1190 0V40H1150M1215 0V45M1240 20V75M1170 100V140M1230 80V125M1285 0V40H1340M1265 80V130M1290 60V110H1340M685 222V270L740 300 870 298 910 280 960 283 985 300 1010 298 1025 350M740 222V340M512 222V395M348 350V290L420 270 510 262M320 510V340L420 320 510 320M485 398H560L580 372H845M845 290V690M518 400V545M518 462H548L560 427H640M350 425H475V520L465 530H350ZM385 425V485H442V425M685 425L800 428 843 440M685 480L843 485M715 485V585M715 533H845M715 583H845M503 565V605L655 618M503 565L545 562 655 545M845 400H1215L1235 402 1524 418M930 290L942 380V720L920 750V805M1065 400L1090 385H1160L1165 250 1120 215M1090 385L1085 230M1220 222V400M1237 400V610M1237 440H1310V580M1272 440V568H1335M1275 510H1340M1297 385V335H1350M1297 385H1350M1400 380V230L1470 235 1468 280H1400M1395 440H1470V510L1400 512M945 612H1235M1262 610H1340M885 690V640Q900 615 920 640V690M1112 612V690L1150 695 1157 612M1205 610V805M1260 610V805M1260 650L1298 655 1305 720 1524 722M570 690L780 682 800 690H1010M570 690L565 745H615L625 720 648 710M580 740V708L615 700M830 690V805M365 590L380 572 475 578V645L455 660 430 645 405 660 403 690 440 712 475 732 480 650M330 590L350 690 380 735 470 745 492 780V805M60 375L110 395 160 430 210 500 245 590 290 680V770L230 750 260 700M115 395L100 440 160 500 185 590 200 680 230 770 265 830M165 460Q190 420 220 470M160 480L200 530 245 690M185 625L255 618M185 597L250 600M28 470L100 545 110 700V790M28 557H100M28 603H105M318 405H285V445H318M290 463H320M290 488H320M130 885V1222M170 885V1025M212 828V1222M28 908H130M28 975H130M28 1025H212M28 1128H130M130 885H212M288 1035L315 1105M280 1140L320 1180M415 1010V915H388M655 840V970L648 1010 655 1035M685 1002H803L808 915M775 1002V920L800 912 865 915H1110M848 915V1018H1135L1195 1010 1270 955M848 970H1010M785 1030V1222M740 1050V1195M740 1112H785M822 1065V1222M705 1065L930 1062M960 1020V1100L932 1112 930 1160 900 1185 822 1190M1110 830V950L1140 965 1138 1000 1120 1050M1140 965L1165 930 1200 900 1210 830M1165 890L1240 905M1195 1010L1210 985H1340M1075 1050V1140M1075 1070L1125 1080M1222 1050L1320 1052 1335 1130H1222ZM1222 1130V1200M1035 1198L1370 1205M1035 1250L1200 1245M1225 1230L1218 1350 1270 1378 1524 1380M1380 945L1524 950M1385 1085L1410 1090V1200L1470 1240 1524 1300M1430 1090L1445 1160 1524 1240M1470 1095L1460 1170M1524 1130L1480 1180M1380 1240L1460 1260 1524 1330M1524 1160L1440 1320M315 1258H253V1315H315M152 1360H315M152 1360V1440L28 1455M152 1440L315 1437M95 1455V1516M345 1468H400L405 1516M425 1380L500 1370M425 1380L440 1470 450 1516M500 1370V1480L470 1516M440 1290L500 1440M540 1280L545 1330 575 1340V1258M575 1395L660 1390M575 1340L580 1430 610 1480H660M838 1235V1358M880 1235V1355M917 1235V1355M955 1235V1358M838 1318H740L710 1325 715 1358H1010M785 1400V1420H1010M785 1405L855 1410V1400M1090 1360V1410L1150 1412 1180 1385 1145 1355H1090M1120 1250V1355M1180 1420L1200 1516M1385 1420H1524M1420 1420V1516M1480 1420V1516",
};
const parks = {
  north: [
    "M915 38H998L985 70 1025 95 1012 145 893 118Z",
    "M1483 38H1524V140L1483 135Z",
    "M1437 133H1483V225H1336V188H1400L1403 168 1432 163Z",
    "M298 183L324 187V318L178 316 190 258 210 247 250 256 254 238 283 232Z",
    "M133 358L155 364 246 366V527H209L190 440 133 455Z",
    "M88 813L112 818V927H28V888L48 882 70 858 90 855Z",
    "M527 1140L660 1138V1301H606V1245L569 1240 587 1215 585 1190 560 1175 527 1173Z",
    "M1193 1222L1376 1218 1377 1318 1193 1316Z",
    "M1287 293L1355 372 1360 395 1324 571 1205 540 1228 430 1205 360 1262 322Z",
  ],
  south: [
    "M1441 605H1510V667H1441Z",
    "M1415 976L1450 990 1472 985 1500 1005 1503 988 1524 990V1090L1408 1070Z",
    "M676 1473H760L765 1498H820V1516H676Z",
  ],
};
const roads = {
  north: [
    ["M330 38L331 220 322 480 321 900 344 970 343 1532", 5],
    ["M668 38V1568", 5],
    ["M1022 228V1568", 8],
    ["M1162 38V228", 5],
    ["M28 730L330 724 668 728 1020 730 1524 722", 8],
    ["M28 325L668 326 750 330 810 352H1205L1262 320 1300 228", 5],
    ["M1200 355V385L1222 425 1220 470 1185 720", 5],
    ["M1320 228L1540 470", 11],
    ["M1160 160H1270L1310 130 1350 125H1483", 4],
    ["M148 730V1532", 5],
    ["M28 1129H668", 4],
    ["M668 1228H1100V1318", 4],
    ["M28 1533L700 1530 1524 1524", 6],
    ["M1340 1324H1524", 4],
    ["M785 38L750 180", 5],
  ],
  south: [
    ["M670 -20V780L667 830V1516", 6],
    ["M1022 -20V1516", 9],
    ["M28 1232H1005L1018 1215", 5],
    ["M28 805L170 818 400 820 1524 815", 8],
    ["M1370 -20L1353 180 1355 240 1372 310V1516", 5],
    ["M265 828L270 860 295 890 358 1100 355 1155 325 1200 320 1516", 5],
    ["M28 872L130 868V828", 4],
    ["M1030 1410L1060 1415 1300 1516", 5],
  ],
};
const ramps =
  "M28 240Q90 190 150 225T330 235M28 310Q90 330 200 410M40 170Q70 210 150 220L280 222M45 235Q35 300 110 330T240 310L320 240M190 262L275 480M215 310L160 400M240 330Q220 360 262 460M50 250Q60 225 110 235M90 320Q190 330 188 280M900 155L1010 128 1090 150M900 185L1010 205 1090 190M28 60Q45 20 30 -10M310 600V820L370 990M330 620L375 800 378 940";
const highways = [
  ["M28 288L60 287 120 272 440 177 800 170 1350 165 1400 175Q1470 200 1524 240", 14],
  ["M28 115L120 272 240 430Q275 480 290 540L320 640 345 820 370 930 470 1220 540 1430 600 1520", 13],
];
const DISTRICT = "#aea37c";
const labels = [
  ["north", "WEST", 412, 52, 600, DISTRICT],
  ["north", "BRALY", 973, 106, 1207, DISTRICT],
  ["north", "CORNERS", 911, 174, 1272, DISTRICT],
  ["north", "STRATFORD", 918, 288, 1370, DISTRICT],
  ["north", "GARDENS", 961, 354, 1332, DISTRICT],
  ["north", "RIGHTMONT", 38, 835, 512, DISTRICT],
  ["north", "CORNERS", 58, 902, 420, DISTRICT],
  ["north", "PANA", 1342, 913, 1535, DISTRICT],
  ["north", "PAR", 1410, 980, 1550, DISTRICT],
  ["north", "PA", 1300, 1388, 1374, DISTRICT],
  ["north", "W Fremont Ave", 222, 745, 641],
  ["north", "E Fremont", 1256, 738, 1529],
  ["north", "The Dalles Ave", 305, 1143, 706],
  ["north", "Alberta Ave", 685, 1244, 1001],
  ["north", "Invern", 1381, 1335, 1530],
  ["north", "W Homestead Rd", 172, 1545, 642],
  ["north", "E H", 1465, 1534, 1550],
  ["south", "k Blvd", 18, 828, 172],
  ["south", "Stev", 1437, 832, 1530],
  ["south", "McClellan Rd", 327, 1246, 681],
];
const verticals = [
  ["north", "Mary Ave", 318, 224, 497, 90],
  ["north", "Hollenbeck Ave", 656, 324, 805, 90],
  ["north", "Sunnyvale Saratoga Rd", 1004, 478, 1180, 90],
  ["north", "Manet Dr", 1205, 736, 450, -85],
  ["north", "Wright Ave", 137, 1158, 1502, 90],
  ["south", "N Stelling Rd", 656, 214, 622, 90],
  ["south", "N De Anza Blvd", 1014, 245, 735, 90],
  ["south", "N Blaney Ave", 1355, 279, 700, 90],
  ["south", "S De", 1005, 1355, 1498, 90],
  ["south", "S B", 1357, 1438, 1530, 90],
];

const City = () => (
  <svg width="649" height="1136">
    <defs>
      <filter id="paper" x="0" y="0" width="100%" height="100%">
        <feTurbulence type="fractalNoise" baseFrequency=".11" numOctaves="2" seed="4" />
        <feColorMatrix values="0 0 0 0 .62  0 0 0 0 .52  0 0 0 0 .28  .55 0 0 0 -.2" />
      </filter>
      <radialGradient id="pinHead" cx=".38" cy=".28" r=".75">
        <stop offset="0" stopColor="#ffb0b0" />
        <stop offset=".22" stopColor="#e8262b" />
        <stop offset=".65" stopColor="#cf0009" />
        <stop offset="1" stopColor="#7d0004" />
      </radialGradient>
      <filter id="soft"><feGaussianBlur stdDeviation="2.5" /></filter>
      <path id="serra" d="M487.5 640L575 641Q600 643 620 652L670 674" />
    </defs>
    <rect width="649" height="1136" fill="#f7f0da" />
    <rect width="649" height="1136" filter="url(#paper)" opacity=".38" />
    <Tile name="south">
      <path d="M383 830L656 828 660 1218 472 1205 415 1020 385 930Z" fill="#ecdaba" />
    </Tile>
    {["north", "south"].map((t) => (
      <Tile key={t} name={t}>
        <path d={lanes[t]} fill="none" stroke="#d2d6cb" strokeWidth="1.5" vectorEffect="non-scaling-stroke" />
        {parks[t].map((d) => (
          <path key={d} d={d} fill="#87d850" stroke="#a9c088" strokeWidth="1.2" vectorEffect="non-scaling-stroke" />
        ))}
      </Tile>
    ))}
    {["north", "south"].map((t) => (
      <Tile key={t} name={t}>
        {roads[t].map(([d, w]) => (
          <path key={d} d={d} fill="none" stroke="#dad4b6" strokeWidth={w + 3} vectorEffect="non-scaling-stroke" />
        ))}
      </Tile>
    ))}
    {["north", "south"].map((t) => (
      <Tile key={t} name={t}>
        {roads[t].map(([d, w]) => (
          <path key={d} d={d} fill="none" stroke="#fff" strokeWidth={w} vectorEffect="non-scaling-stroke" />
        ))}
      </Tile>
    ))}
    <Tile name="north">
      <path d="M723 150L745 168 760 185 790 228H735L742 200 725 188Z" fill="#fff" />
    </Tile>
    <Tile name="south">
      <path d={ramps} fill="none" stroke="#eeb06a" strokeWidth="4.5" vectorEffect="non-scaling-stroke" />
      <path d={ramps} fill="none" stroke="#ffe0a0" strokeWidth="2.5" vectorEffect="non-scaling-stroke" />
      {highways.map(([d, w]) => (
        <path key={d} d={d} fill="none" stroke="#e3a12c" strokeWidth={w + 2.5} vectorEffect="non-scaling-stroke" />
      ))}
      {highways.map(([d, w]) => (
        <path key={d} d={d} fill="none" stroke="#fdd70d" strokeWidth={w} vectorEffect="non-scaling-stroke" />
      ))}
    </Tile>
    {labels.map(([tile, word, x, y, end, fill]) => {
      const [px, py] = toMap(tile, x, y);
      return (
        <MapText key={word + y} x={px} y={py} $fill={fill} textLength={(end - x) / 2.3059}>
          {word}
        </MapText>
      );
    })}
    {verticals.map(([tile, word, x, y, end, angle]) => {
      const [px, py] = toMap(tile, x, y);
      return (
        <MapText
          key={word}
          $size={24.5}
          transform={`translate(${px} ${py}) rotate(${angle})`}
          textLength={Math.abs(end - y) / tiles[tile].ky}
        >
          {word}
        </MapText>
      );
    })}
    <MapText x="242.5" y="897.500" $size={36} $weight={700} $fill="#b9b08b" textLength="200">Cupertino</MapText>
    <MapText><textPath href="#serra" textLength="168">Junipero Serra</textPath></MapText>
    <rect x="640" y="164" width="30" height="24" rx="11" fill="#1e8a4c" stroke="#fff" strokeWidth="3" />
    <path d="M467 692L487 668" stroke="#000" strokeOpacity=".45" strokeWidth="6" filter="url(#soft)" />
    <ellipse cx="491" cy="663" rx="15" ry="7.500" fill="#000" opacity=".5" filter="url(#soft)" transform="rotate(-12 491 663)" />
    <path d="M464.500 645V693" stroke="#6d747d" strokeWidth="5" />
    <path d="M464 645V693" stroke="#c3c9d1" strokeWidth="2" />
    <circle cx="464.600" cy="636.500" r="15" fill="url(#pinHead)" />
  </svg>
);

const Callout = styled.div`
  position: absolute;
  left: 74px;
  top: 489px;
  display: flex;
  align-items: center;
  width: 496px;
  height: 86px;
  padding: 0 19px;
  border-radius: 12px;
  background: linear-gradient(rgba(110, 110, 108, 0.94), rgba(78, 77, 74, 0.93) 51%, rgba(50, 48, 44, 0.86) 52%, rgba(50, 49, 46, 0.9));
  box-shadow: inset 0 0 0 1.5px rgba(40, 40, 40, 0.5), 0 6px 8px rgba(0, 0, 0, 0.45);
  color: #fff;
  &::after {
    content: "";
    position: absolute;
    left: 361px;
    top: 86px;
    width: 53px;
    height: 27px;
    background: linear-gradient(rgba(50, 49, 46, 0.92), #47453e);
    clip-path: polygon(0 0, 100% 0, 50% 100%);
  }
`;
const CalloutText = styled.div`
  flex: 1;
  padding: 0 0 6px 22px;
`;
const CalloutTitle = styled.div`
  font-size: 34px;
  line-height: 34px;
  text-shadow: 0 -2px 0 rgba(0, 0, 0, 0.4);
`;
const CalloutSub = styled.div`
  margin-top: 7px;
  font-size: 24px;
  font-weight: 400;
`;

const MapColumn = () => (
  <Column $w={649} $ml={101}>
    <MapFrame>
      <City />
      <Callout>
        <AppIcon id="appPin" size={46} />
        <CalloutText>
          <CalloutTitle>Label, Inc.</CalloutTitle>
          <CalloutSub>63 reviews on Yelp</CalloutSub>
        </CalloutText>
        <Disc id="dPin" tone="blue">{DiscArrow}</Disc>
      </Callout>
    </MapFrame>
  </Column>
);

/* ---------- indexed table ---------- */

const Table = styled.div`
  position: relative;
  height: 1136px;
  overflow: hidden;
`;
const SectionHead = styled.h3`
  height: ${(p) => p.$h}px;
  margin: 0;
  padding: 7px 0 0 24px;
  font-size: 36px;
  line-height: 36px;
  color: #fff;
  background: linear-gradient(#84949f, #a3afb9);
  box-shadow: inset 0 2px 0 #7a858f, inset 0 4px 0 #97a5b0, inset 0 -2px 0 #8d99a4;
  text-shadow: 0 2px 0 rgba(60, 70, 80, 0.6);
`;
const Row = styled.div`
  height: ${(p) => p.$h}px;
  padding: ${(p) => p.$pt || 22}px 0 0 20px;
  font-size: 40px;
  line-height: 40px;
  border-bottom: ${(p) => (p.$line ? "2px solid #e0e0e0" : 0)};
`;
const IndexStrip = styled.ol`
  position: absolute;
  left: 582px;
  top: 31.5px;
  width: 40px;
  margin: 0;
  padding: 0;
  list-style: none;
  text-align: center;
  font-size: 22px;
  color: #5e6873;
  li { height: 40.55px; line-height: 40.55px; }
  li:last-child { font-weight: 400; }
`;

const TableColumn = () => (
  <Column $w={640} $ml={100}>
    <Table>
      <SearchBar $h={88} $pr={63} $pt={1}>
        <SearchField $h={59} $empty>
          <Lens />
          <Query>Search</Query>
        </SearchField>
      </SearchBar>
      <SectionHead $h={48}>A</SectionHead>
      <Row $h={86} $pt={21}>Label</Row>
      <SectionHead $h={49}>B</SectionHead>
      <Row $h={87}>Label</Row>
      <SectionHead $h={49}>C</SectionHead>
      <Row $h={87} $line>Label</Row>
      <Row $h={88} $line $pt={23}>Label</Row>
      <Row $h={87} $pt={23}>Label</Row>
      <SectionHead $h={48}>D</SectionHead>
      <Row $h={87} $line>Label</Row>
      <Row $h={88} $line $pt={23}>Label</Row>
      <Row $h={88} $line $pt={23}>Label</Row>
      <Row $h={88} $line $pt={23}>Label</Row>
      <Row $h={88} $pt={23}>Label</Row>
      <IndexStrip>
        {[..."ABCDEFGHIJKLMNOPQRSTUVWXYZ#"].map((c) => <li key={c}>{c}</li>)}
      </IndexStrip>
    </Table>
  </Column>
);

/* ---------- action sheet ---------- */

const SheetScreen = styled.div`
  display: flex;
  flex-direction: column;
  justify-content: flex-end;
  height: 1136px;
  background: #808080;
`;
const Sheet = styled.div`
  height: 413px;
  padding: 40px 42px 0;
  background: linear-gradient(#989faa, #515761 60px, #505661);
  box-shadow: 0 -1px 0 #3e4146, 0 -3px 4px rgba(0, 0, 0, 0.3), inset 0 2px 0 #c5c9ce, inset 0 -1px 0 #8a8f96;
`;
const SheetWell = styled.div`
  height: 91px;
  margin-bottom: ${(p) => p.$mb || 0}px;
  padding: 6px;
  border-radius: 24px;
  background: linear-gradient(#1f2126, #34363f 12%, #34363f);
  box-shadow: 0 2px 0 #737883;
`;
const sheetFill = {
  red: "linear-gradient(#f07a7e, #dd3b40 35%, #d0010c 72%, #c80004 84%, #dd3036)",
  light: "linear-gradient(#fafafa, #cfcfcf 45%, #adadad 82%, #d2d2d2)",
  dark: "linear-gradient(#525257, #34363d 40%, #20232b 82%, #2b2e36)",
};
const SheetButton = styled.button`
  display: flex;
  align-items: center;
  justify-content: center;
  width: 100%;
  height: 79px;
  padding: 0 0 2px 21px;
  border: 0;
  border-radius: 18px;
  font: 700 40px "Liberation Sans", Arial, sans-serif;
  line-height: 1;
  color: ${(p) => (p.$tone === "light" ? "#000" : "#fff")};
  background: ${(p) => sheetFill[p.$tone]};
  text-shadow: ${(p) => (p.$tone === "light" ? "0 2px 0 rgba(255,255,255,.5)" : "0 -2px 0 rgba(0,0,0,.4)")};
  box-shadow: inset 0 0 0 1.5px rgba(255, 255, 255, ${(p) => (p.$tone === "dark" ? 0.18 : 0.4)});
`;

const SheetColumn = () => (
  <Column $w={640} $ml={100}>
    <SheetScreen>
      <Sheet>
        <SheetWell $mb={16}><SheetButton $tone="red">Label</SheetButton></SheetWell>
        <SheetWell $mb={44}><SheetButton $tone="light">Label</SheetButton></SheetWell>
        <SheetWell><SheetButton $tone="dark">Label</SheetButton></SheetWell>
      </Sheet>
    </SheetScreen>
  </Column>
);

export default function App() {
  return (
    <Page>
      <Global />
      <Band $h={1115}>
        <BarsColumn />
        <ControlsColumn />
        <SettingsColumn />
      </Band>
      <Band $h={1173}>
        <AlertColumn />
        <MapColumn />
        <TableColumn />
        <SheetColumn />
      </Band>
    </Page>
  );
}
